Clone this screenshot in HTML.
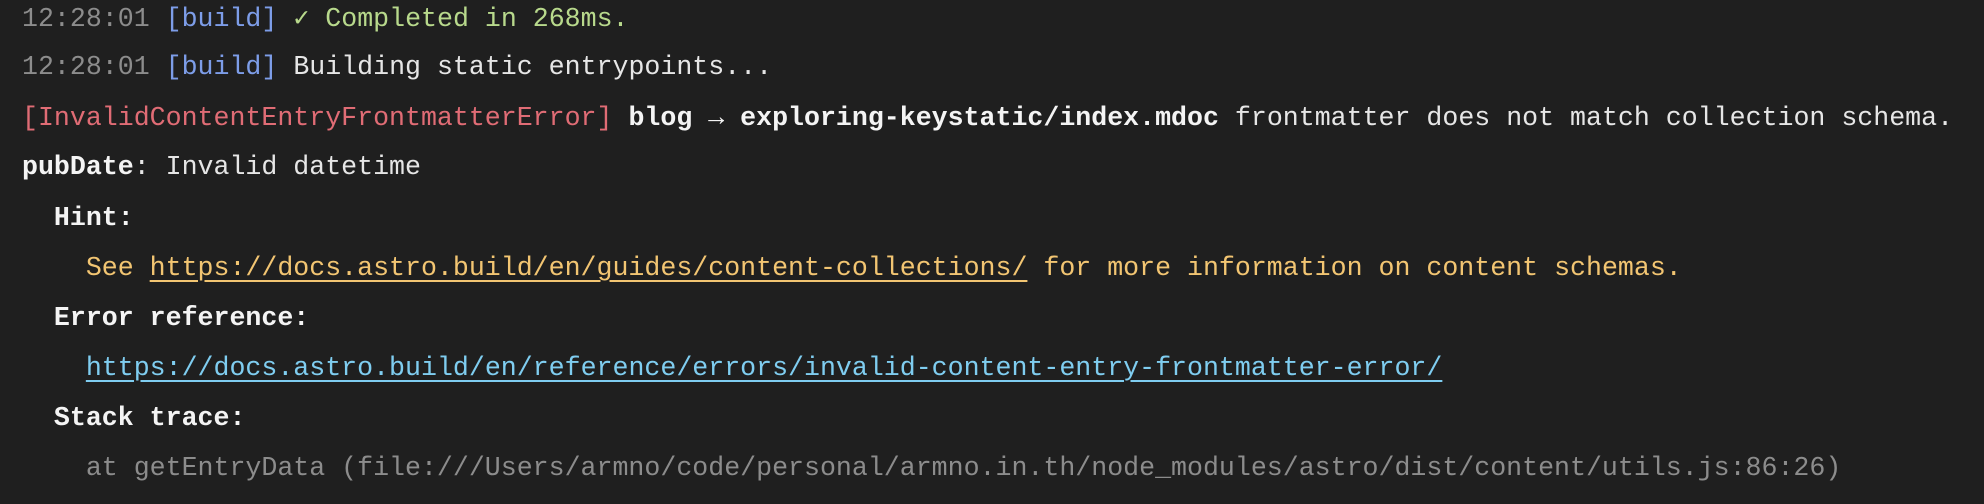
<!DOCTYPE html>
<html><head><meta charset="utf-8"><style>
html,body{margin:0;padding:0;background:#1f1f1f;width:1984px;height:504px;overflow:hidden}
.l{position:absolute;left:22px;height:50px;line-height:50px;font-family:"Liberation Mono","DejaVu Sans Mono",monospace;font-size:26.6px;color:#e6e6e6;white-space:pre}
.g{color:#8c8c8c}.b{color:#7d9de8}.gr{color:#b8d98c}.r{color:#e06c75}.y{color:#f2c572}.c{color:#7fcdf0}
b{font-weight:bold;color:#f4f4f4}
u{text-decoration:underline;text-underline-offset:5px;text-decoration-thickness:2px}
</style></head><body>
<div class="l" style="top:-6px"><span class="g">12:28:01</span> <span class="b">[build]</span> <span class="gr">✓ Completed in 268ms.</span></div>
<div class="l" style="top:42px"><span class="g">12:28:01</span> <span class="b">[build]</span> Building static entrypoints...</div>
<div class="l" style="top:93px"><span class="r">[InvalidContentEntryFrontmatterError]</span> <b>blog → exploring-keystatic/index.mdoc</b> frontmatter does not match collection schema.</div>
<div class="l" style="top:142px"><b>pubDate</b>: Invalid datetime</div>
<div class="l" style="top:193px">  <b>Hint:</b></div>
<div class="l y" style="top:243px">    See <u>https://docs.astro.build/en/guides/content-collections/</u> for more information on content schemas.</div>
<div class="l" style="top:293px">  <b>Error reference:</b></div>
<div class="l c" style="top:343px">    <u>https://docs.astro.build/en/reference/errors/invalid-content-entry-frontmatter-error/</u></div>
<div class="l" style="top:393px">  <b>Stack trace:</b></div>
<div class="l g" style="top:443px">    at getEntryData (file:///Users/armno/code/personal/armno.in.th/node_modules/astro/dist/content/utils.js:86:26)</div>
</body></html>
